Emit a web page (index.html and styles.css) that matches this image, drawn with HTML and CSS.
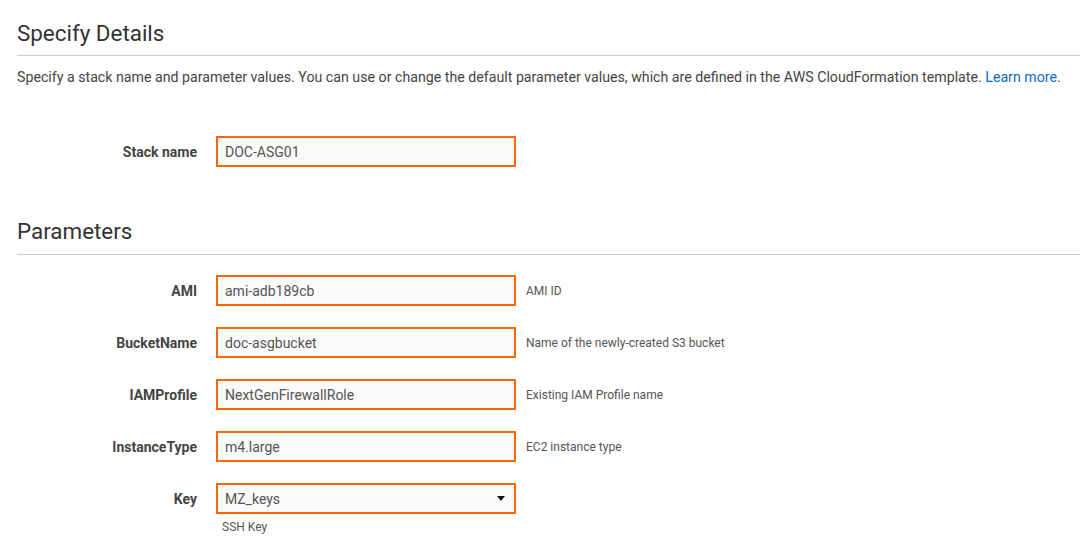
FILE: index.html
```html
<!DOCTYPE html>
<html lang="en">
<head>
    <meta charset="UTF-8">
    <meta name="viewport" content="width=device-width, initial-scale=1.0">
    <title>Specify Details</title>
    <link rel="stylesheet" href="styles.css">
</head>
<body>
    <div class="page">
        <h2 class="section-title">Specify Details</h2>
        <p class="intro">Specify a stack name and parameter values. You can use or change the default parameter values, which are defined in the AWS CloudFormation template. <a href="#">Learn more.</a></p>

        <div class="stack-row">
            <label class="field-label" for="stackName">Stack name</label>
            <input class="field-input" type="text" id="stackName" value="DOC-ASG01">
        </div>

        <h2 class="section-title params-title">Parameters</h2>

        <div class="params">
            <div class="param-row">
                <label class="field-label" for="ami">AMI</label>
                <input class="field-input" type="text" id="ami" value="ami-adb189cb">
                <span class="help">AMI ID</span>
            </div>
            <div class="param-row">
                <label class="field-label" for="bucket">BucketName</label>
                <input class="field-input" type="text" id="bucket" value="doc-asgbucket">
                <span class="help">Name of the newly-created S3 bucket</span>
            </div>
            <div class="param-row">
                <label class="field-label" for="iam">IAMProfile</label>
                <input class="field-input" type="text" id="iam" value="NextGenFirewallRole">
                <span class="help">Existing IAM Profile name</span>
            </div>
            <div class="param-row">
                <label class="field-label" for="itype">InstanceType</label>
                <input class="field-input" type="text" id="itype" value="m4.large">
                <span class="help">EC2 instance type</span>
            </div>
            <div class="param-row">
                <label class="field-label" for="key">Key</label>
                <div class="field-input select-box" id="key">
                    <span>MZ_keys</span>
                    <svg class="caret" width="8" height="5" viewBox="0 0 8 5"><path d="M0 0h8L4 5z" fill="#111"/></svg>
                </div>
                <span class="help"></span>
                <span class="help under">SSH Key</span>
            </div>
        </div>
    </div>
</body>
</html>
```

FILE: styles.css
```css
body {
    margin: 0;
    background-color: #fff;
    font-family: Roboto, "Liberation Sans", sans-serif;
    color: #444;
    overflow: hidden;
}
.page {
    padding: 0 0 0 17px;
}
.section-title {
    margin: 0;
    padding: 20px 0 9px 0;
    font-size: 22.4px;
    font-weight: 400;
    line-height: 26px;
    color: #333;
    border-bottom: 1px solid #ccc;
}
.intro {
    margin: 11px 0 0 0;
    font-size: 14.2px;
    line-height: 20px;
    color: #444;
}
.intro a {
    color: #0f6bc4;
    text-decoration: none;
}
.stack-row,
.param-row {
    display: grid;
    grid-template-columns: 180px 300px auto;
    column-gap: 19px;
    align-items: center;
}
.stack-row {
    margin-top: 49px;
}
.field-label {
    text-align: right;
    font-size: 14px;
    font-weight: 700;
    color: #444;
}
.field-input {
    box-sizing: border-box;
    width: 300px;
    height: 31px;
    margin: 0;
    padding: 0 7px;
    border: 2px solid #ff6600;
    border-radius: 0;
    background-color: #fafafa;
    font-family: Roboto, "Liberation Sans", sans-serif;
    font-size: 14px;
    color: #555;
    outline: none;
}
.params-title {
    margin-top: 31px;
    padding-bottom: 10px;
}
.params {
    display: flex;
    flex-direction: column;
    gap: 21px;
    padding-top: 20px;
}
.help {
    margin-left: -9px;
    font-size: 12px;
    color: #555;
}
.select-box {
    display: flex;
    align-items: center;
    justify-content: space-between;
    padding-right: 9px;
}
.caret {
    display: block;
}
.under {
    grid-column: 2;
    margin: 6px 0 0 6px;
}
```
